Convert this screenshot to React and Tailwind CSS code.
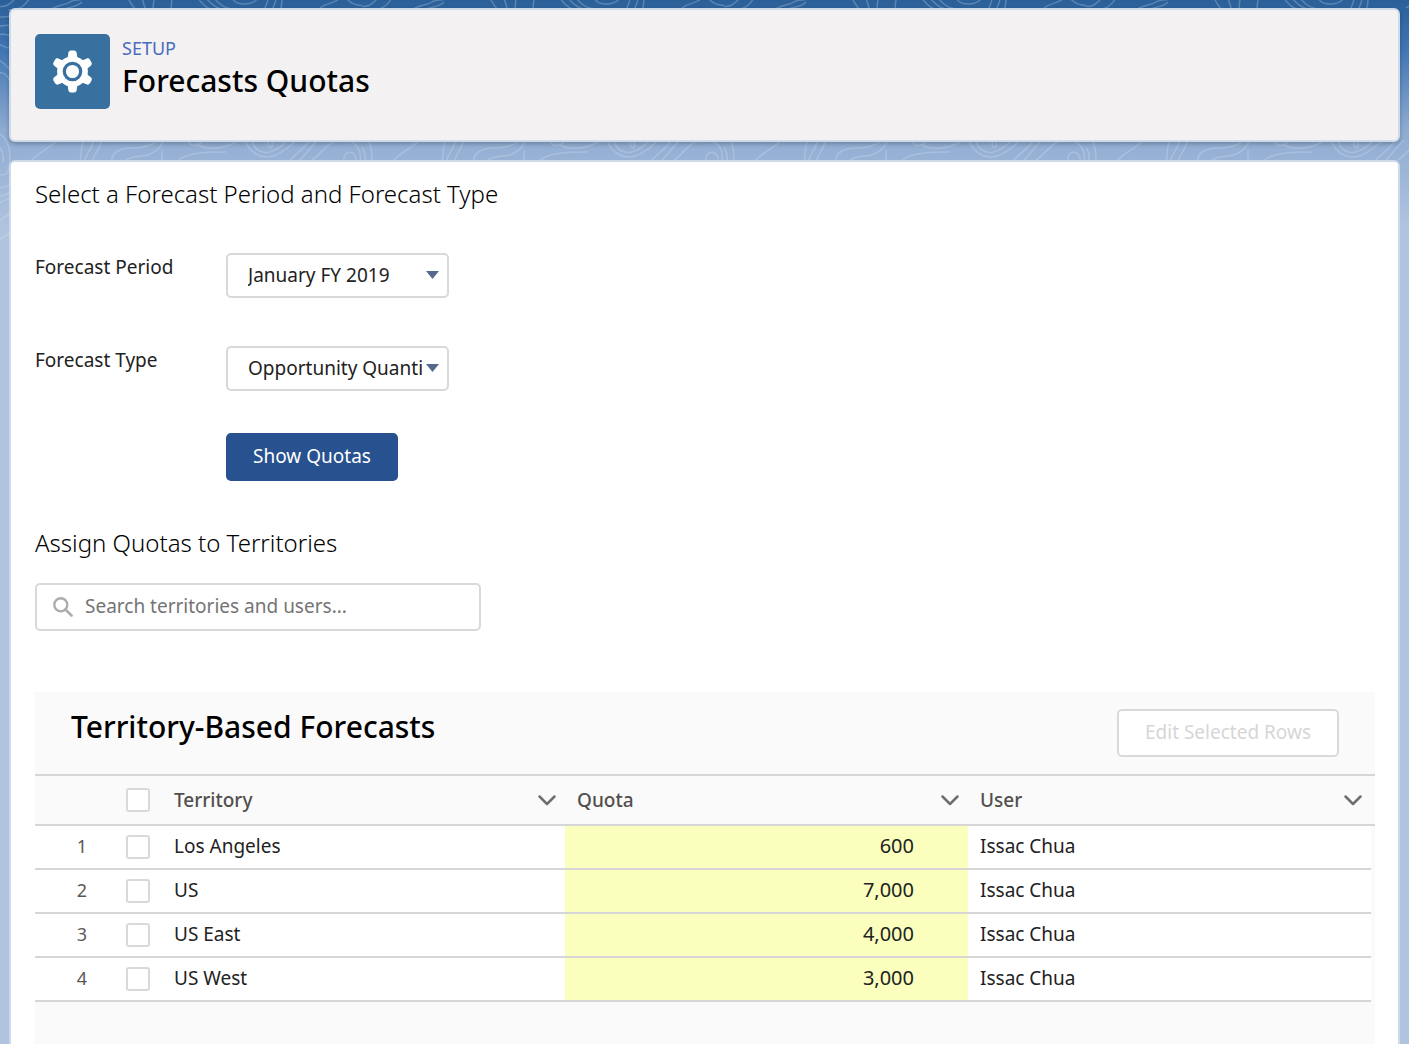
import React from 'react';

const rows = [
  { territory: 'Los Angeles', quota: '600', user: 'Issac Chua' },
  { territory: 'US', quota: '7,000', user: 'Issac Chua' },
  { territory: 'US East', quota: '4,000', user: 'Issac Chua' },
  { territory: 'US West', quota: '3,000', user: 'Issac Chua' },
];

function Backdrop() {
  return (
    <svg className="absolute inset-x-0 top-0 h-[300px] w-full" aria-hidden="true">
      <defs>
        <pattern id="contours" width="362" height="300" patternUnits="userSpaceOnUse">
          <g fill="none" stroke="#dbe8f5" strokeOpacity="0.26" strokeWidth="1.5">
            <path d="M-2 6c8 2 12-2 18-8M8 10c14 0 18-6 22-12M50 10c8-6 14-4 20-8s10 0 14-4M62 10c8-4 14-2 20-8M128 -2c3 6 4 8 8 12M142 -2c2 6 2 8 4 12M154 -2c0 6-2 8 0 12M172 -2c0 6-2 8 0 12M198 -2c8 12 18 14 22 12M206 -2c8 10 16 12 22 12M214 -2c8 10 14 10 20 12M232 -2c4 8 20 8 26 0M264 10c2-4 4-8 4-12M272 10c2-4 4-8 4-12M280 10c2-4 2-8 2-12M320 8c8-6 14-4 20-10M346 -2c8 10 26 10 34 0" />
            <path d="M-4 18c4-2 8 0 14-2M-4 26c6 2 8-3 14 0M-4 34c6 2 8-2 14 2M-4 44c6 0 10 5 14 4M-4 58c6 4 8 4 14 12M-4 74c8-4 12 2 14 8M-4 132c10 4 14 12 14 28s-6 16-14 14M-4 144c6 4 8 10 7 18M-4 190c6-4 10-2 14-6M-4 198c6-4 10-2 14-6M-4 206c6-6 10-6 14-8M-4 224c6-6 10-6 14-12M-4 242c6-6 10-4 14-10" />
            <path d="M30 162c6-8 16-12 26-20M80 162c2-8 0-14 4-22M84 162c2-8 8-14 10-22M92 162c2-8 8-14 10-22M112 162c-2-10 10-14 20-14s20-2 26-8M124 162c8-8 18-4 26-8s10-6 14-14M162 162v-12M188 140c2 8 10 6 14 2M176 162c10-10 32-10 50-10M196 144c10 6 26 6 40-2" />
            <path d="M245 140c4 12 16 20 28 16s16-10 24-16M252 140c2 10 10 14 18 12s14-8 18-12M268 142c0 8 6 7 4 0M290 160c6-6 14-12 20-20M300 160c6-6 10-12 18-20M312 160c10-6 16-20 30-20s20 10 18 22M344 162c-2-14 14-12 12 0" />
          </g>
        </pattern>
      </defs>
      <rect width="100%" height="100%" fill="url(#contours)" />
    </svg>
  );
}

function SelectField({ id, label, option }) {
  return (
    <div className="flex items-start">
      <label htmlFor={id} className="w-[191px] shrink-0 leading-7">
        {label}
      </label>
      <div className="relative w-[223px]">
        <select
          id={id}
          className="h-[45px] w-full appearance-none rounded-[5px] border-2 border-[#d9d9d9] bg-white pr-6 pl-5 text-[#222222]"
        >
          <option>{option}</option>
        </select>
        <svg
          className="pointer-events-none absolute top-[18px] right-[10px] h-2 w-[13px]"
          viewBox="0 0 13 8"
          aria-hidden="true"
        >
          <path d="M0 0h13L6.500 8z" fill="#54698d" />
        </svg>
      </div>
    </div>
  );
}

function Tick({ label }) {
  return (
    <input
      type="checkbox"
      aria-label={label}
      className="block h-6 w-6 appearance-none rounded-[3px] border-2 border-[#d9d9d9] bg-white checked:bg-[#27518f]"
    />
  );
}

function HeaderCell({ children }) {
  return (
    <th scope="col" className="h-[50px] border-b-2 border-[#d6d6d6] px-3 font-medium">
      <div className="flex items-center justify-between">
        <span>{children}</span>
        <button type="button" aria-label={`${children} column actions`} className="-mr-1">
          <svg className="block h-3 w-5" viewBox="0 0 20 12" fill="none" aria-hidden="true">
            <path
              d="M2.500 2.500l7.500 7.500 7.500-7.500"
              stroke="#706e6b"
              strokeWidth="2.500"
              strokeLinecap="round"
              strokeLinejoin="round"
            />
          </svg>
        </button>
      </div>
    </th>
  );
}

export default function App() {
  return (
    <div className="relative flex min-h-screen flex-col gap-[18px] bg-[#b1c4df] bg-[linear-gradient(#2a5f98_0px,#4176b3_50px,#8eabd2_130px,#b1c4df_230px)] px-[9px] pt-2 font-['Noto_Sans',sans-serif] text-[19px] text-[#222222]">
      <Backdrop />

      <header className="relative flex h-[134px] items-start gap-3 rounded-md border-2 border-[#cfdae8] bg-[#f3f1f2] px-6 pt-6 shadow-[0_2px_4px_rgba(0,0,0,0.25)]">
        <div className="flex h-[75px] w-[75px] shrink-0 items-center justify-center rounded-[5px] bg-[#38719f]">
          <svg className="h-[43px] w-[43px]" viewBox="0 0 42 42" aria-hidden="true">
            <g fill="#ffffff">
              <circle cx="21" cy="21" r="15" />
              <path
                id="tooth"
                d="M19.500 0.500h3c1.500 0 2.400 1 2.600 2.500l.6 4.500 3 3v21l-3 3-.6 4.500c-.2 1.500-1.100 2.500-2.600 2.500h-3c-1.500 0-2.400-1-2.600-2.500l-.6-4.500-3-3v-21l3-3 .6-4.500c.2-1.500 1.100-2.500 2.600-2.500z"
              />
              <use href="#tooth" transform="rotate(60 21 21)" />
              <use href="#tooth" transform="rotate(120 21 21)" />
            </g>
            <circle cx="21" cy="21" r="8" fill="none" stroke="#38719f" strokeWidth="3.200" />
          </svg>
        </div>
        <div>
          <p className="text-[18px] leading-7 text-[#4a6bbd]">SETUP</p>
          <h1 className="text-[30px] leading-[38px] font-medium text-black">Forecasts Quotas</h1>
        </div>
      </header>

      <main className="relative flex grow flex-col rounded-t-md border-2 border-b-0 border-[#cfdae8] bg-white px-6 pt-4 pr-[23px]">
        <h2 className="text-[24px] leading-8 font-light text-black">Select a Forecast Period and Forecast Type</h2>

        <form className="mt-[43px] flex flex-col" onSubmit={(e) => e.preventDefault()}>
          <SelectField id="period" label="Forecast Period" option="January FY 2019" />
          <div className="mt-12">
            <SelectField id="type" label="Forecast Type" option="Opportunity Quantity" />
          </div>
          <button
            type="submit"
            className="mt-[42px] ml-[191px] h-12 w-[172px] rounded-[5px] bg-[#27518f] pb-0.5 text-white"
          >
            Show Quotas
          </button>
        </form>

        <h2 className="mt-[46px] text-[24px] leading-8 font-light text-black">Assign Quotas to Territories</h2>
        <div className="mt-6 flex h-12 w-[446px] items-center gap-3 rounded-[5px] border-2 border-[#d9d9d9] px-4">
          <svg className="h-5 w-5 shrink-0" viewBox="0 0 20 20" fill="none" stroke="#adadad" aria-hidden="true">
            <circle cx="7.800" cy="7.800" r="6.500" strokeWidth="2.400" />
            <path d="M12.500 12.500l6 6" strokeWidth="2.600" strokeLinecap="round" />
          </svg>
          <input
            type="search"
            aria-label="Search territories and users"
            placeholder="Search territories and users..."
            className="min-w-0 grow bg-transparent pb-0.5 outline-none placeholder:text-[#747474]"
          />
        </div>

        <section className="mt-[61px] grow bg-[#fafafa]">
          <div className="flex items-start justify-between px-9 py-[17px]">
            <h2 className="text-[30px] leading-9 font-medium text-black">Territory-Based Forecasts</h2>
            <button
              type="button"
              disabled
              className="h-12 w-[222px] rounded-[5px] border-2 border-[#d9d9d9] bg-white pb-0.5 text-[#d6d6d6]"
            >
              Edit Selected Rows
            </button>
          </div>

          <table className="w-full table-fixed border-separate border-spacing-0 border-t-2 border-[#d6d6d6] text-left">
            <colgroup>
              <col className="w-[79px]" />
              <col className="w-12" />
              <col />
              <col />
              <col />
              <col className="w-1" />
            </colgroup>
            <thead className="text-[#514f4d]">
              <tr>
                <td className="border-b-2 border-[#d6d6d6]" />
                <td className="border-b-2 border-[#d6d6d6] px-3">
                  <Tick label="Select all rows" />
                </td>
                <HeaderCell>Territory</HeaderCell>
                <HeaderCell>Quota</HeaderCell>
                <HeaderCell>User</HeaderCell>
                <td className="border-b-2 border-[#d6d6d6]" />
              </tr>
            </thead>
            <tbody>
              {rows.map((row, i) => (
                <tr key={row.territory}>
                  <td className="h-11 border-b-2 border-[#d6d6d6] bg-white pr-[27px] pb-0.5 text-right text-[18px] text-[#5a5856]">
                    {i + 1}
                  </td>
                  <td className="border-b-2 border-[#d6d6d6] bg-white px-3">
                    <Tick label={`Select ${row.territory}`} />
                  </td>
                  <td className="border-b-2 border-[#d6d6d6] bg-white px-3 pb-0.5">{row.territory}</td>
                  <td className="border-b-2 border-[#d6d6d6] bg-[#faffbd] pr-[54px] pb-0.5 text-right text-[20px]">
                    {row.quota}
                  </td>
                  <td className="border-b-2 border-[#d6d6d6] bg-white px-3 pb-0.5">{row.user}</td>
                  <td />
                </tr>
              ))}
            </tbody>
          </table>
        </section>
      </main>
    </div>
  );
}
